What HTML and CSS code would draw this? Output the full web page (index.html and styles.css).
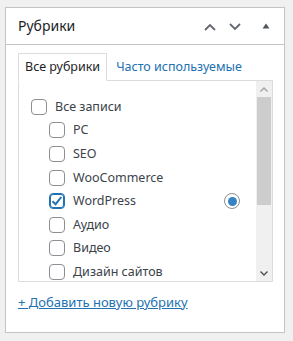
FILE: index.html
```html
<!DOCTYPE html>
<html lang="ru">
<head>
<meta charset="utf-8">
<link rel="stylesheet" href="styles.css">
</head>
<body>
<div class="postbox">
  <div class="postbox-header">
    <h2 class="hndle">Рубрики</h2>
    <div class="handle-actions">
      <button class="handle-btn btn-up" aria-label="Вверх">
        <svg width="12" height="8" viewBox="0 0 12 8"><path d="M1 7 L6 2 L11 7" fill="none" stroke="#646970" stroke-width="1.8"/></svg>
      </button>
      <button class="handle-btn btn-down" aria-label="Вниз">
        <svg width="12" height="8" viewBox="0 0 12 8"><path d="M1 1 L6 6 L11 1" fill="none" stroke="#646970" stroke-width="1.8"/></svg>
      </button>
      <button class="handle-btn btn-toggle" aria-label="Свернуть">
        <svg width="8" height="6" viewBox="0 0 8 6"><path d="M4 0.5 L7.5 5.5 L0.5 5.5 Z" fill="#50575e"/></svg>
      </button>
    </div>
  </div>
  <div class="inside">
    <ul class="tabs">
      <li class="tab active">Все рубрики</li>
      <li class="tab"><a href="#">Часто используемые</a></li>
    </ul>
    <div class="tabs-panel">
      <ul class="checklist">
        <li>
          <label class="item"><input type="checkbox" class="cb">Все записи</label>
          <ul class="children">
            <li><label class="item"><input type="checkbox" class="cb">PC</label></li>
            <li><label class="item"><input type="checkbox" class="cb">SEO</label></li>
            <li><label class="item"><input type="checkbox" class="cb">WooCommerce</label></li>
            <li class="primary-row"><label class="item"><input type="checkbox" class="cb" checked>WordPress</label><span class="radio"></span></li>
            <li><label class="item"><input type="checkbox" class="cb">Аудио</label></li>
            <li><label class="item"><input type="checkbox" class="cb">Видео</label></li>
            <li><label class="item"><input type="checkbox" class="cb">Дизайн сайтов</label></li>
          </ul>
        </li>
      </ul>
      <div class="scrollbar">
        <div class="sb-btn">
          <svg width="8" height="5" viewBox="0 0 8 5"><path d="M0.5 4.5 L4 1 L7.5 4.5" fill="none" stroke="#a3a3a3" stroke-width="1.4"/></svg>
        </div>
        <div class="sb-thumb"></div>
        <div class="sb-track"></div>
        <div class="sb-btn">
          <svg width="8" height="5" viewBox="0 0 8 5"><path d="M0.5 0.5 L4 4 L7.5 0.5" fill="none" stroke="#505050" stroke-width="1.4"/></svg>
        </div>
      </div>
    </div>
    <a href="#" class="add-link">+ Добавить новую рубрику</a>
  </div>
</div>
</body>
</html>
```

FILE: styles.css
```css
* { box-sizing: border-box; }

body {
  margin: 0;
  background: #f0f0f1;
  font-family: "Noto Sans", "Open Sans", sans-serif;
  font-size: 12.5px;
  color: #3c434a;
}

.postbox {
  margin: 7px 0 0 5px;
  width: 280px;
  height: 326px;
  background: #fff;
  border: 1px solid #c3c4c7;
}

.postbox-header {
  display: flex;
  align-items: center;
  height: 37px;
  border-bottom: 1px solid #c3c4c7;
}

.hndle {
  flex: 1;
  margin: 0;
  padding-left: 12px;
  font-size: 14px;
  font-weight: 400;
  color: #1d2327;
  line-height: 1.4;
}

.handle-actions {
  display: flex;
  height: 100%;
}

.handle-btn {
  display: flex;
  align-items: center;
  justify-content: center;
  height: 100%;
  padding: 0;
  border: 0;
  background: none;
}

.btn-up { width: 25px; padding-top: 1px; }
.btn-down { width: 26px; padding-top: 1px; }
.btn-toggle { width: 36px; padding-top: 0; }

.inside {
  padding: 8px 11px 0 12px;
}

.tabs {
  display: flex;
  gap: 2px;
  margin: 0;
  padding: 0;
  list-style: none;
}

.tab {
  padding: 0 6px;
  height: 28px;
  line-height: 26px;
  border: 1px solid transparent;
  margin-bottom: -1px;
  position: relative;
}

.tab.active {
  border-color: #dcdcde;
  border-bottom-color: #fff;
  background: #fff;
  color: #1d2327;
  z-index: 1;
}

.tab a {
  color: #2271b1;
  text-decoration: none;
}

.tabs-panel {
  display: flex;
  height: 202px;
  border: 1px solid #dcdcde;
  overflow: hidden;
}

.checklist {
  flex: 1;
  margin: 0;
  padding: 14px 16px 0 12px;
  list-style: none;
  overflow: hidden;
}

.checklist li { margin: 0; }

.children {
  margin: 0;
  padding: 0 0 0 18px;
  list-style: none;
}

.item {
  display: flex;
  align-items: center;
  height: 23.6px;
  line-height: 18px;
  color: #3c434a;
}

.cb {
  appearance: none;
  -webkit-appearance: none;
  flex: none;
  width: 16px;
  height: 16px;
  margin: 0 8px 0 0;
  border: 1px solid #8c8f94;
  border-radius: 4px;
  background: #fff;
}

.cb:checked {
  border-color: #2271b1;
  box-shadow: inset 0 0 0 1px #2271b1;
  background-image: url("data:image/svg+xml,%3Csvg xmlns='http://www.w3.org/2000/svg' viewBox='0 0 16 16'%3E%3Cpath d='M3.5 8.2 L6.6 11.2 L12.3 4' fill='none' stroke='%232271b1' stroke-width='2'/%3E%3C/svg%3E");
  background-size: 16px 16px;
  background-position: -1px -1px;
}

.primary-row {
  display: flex;
  align-items: center;
}

.radio {
  flex: none;
  width: 16px;
  height: 16px;
  margin-left: auto;
  border: 1px solid #8c8f94;
  border-radius: 50%;
  display: flex;
  align-items: center;
  justify-content: center;
}

.radio::after {
  content: "";
  width: 9px;
  height: 9px;
  border-radius: 50%;
  background: #3582c4;
}

.scrollbar {
  flex: none;
  width: 16px;
  display: flex;
  flex-direction: column;
  background: #f0f0f0;
}

.sb-btn {
  height: 16px;
  display: flex;
  align-items: center;
  justify-content: center;
}

.sb-thumb {
  height: 108px;
  margin: 0 1px;
  background: #cdcdcd;
}

.sb-track { flex: 1; }

.add-link {
  display: inline-block;
  margin-top: 10px;
  line-height: 20px;
  font-size: 13px;
  color: #2271b1;
  text-decoration: underline;
}
```
